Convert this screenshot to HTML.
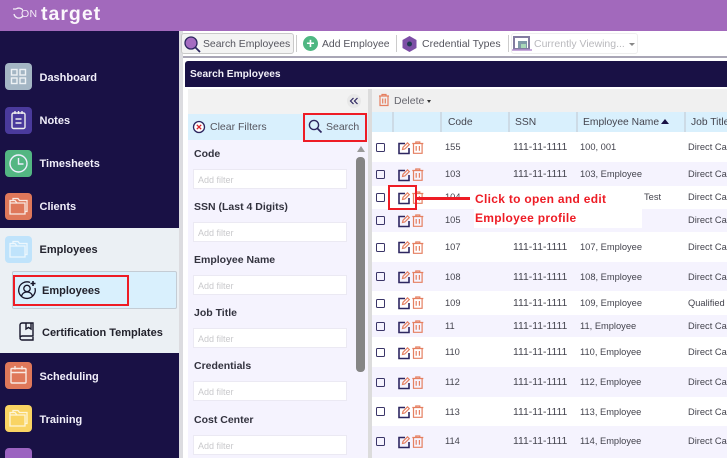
<!DOCTYPE html>
<html><head><meta charset="utf-8">
<style>
html,body{margin:0;padding:0;overflow:hidden;width:727px;height:458px}
body{position:relative;background:#fff;font-family:"Liberation Sans",sans-serif;font-size:10px;color:#3d3d48}
.a,svg{position:absolute}
.t{position:absolute;white-space:nowrap;line-height:14px}
.nav{font-size:11px;font-weight:bold;color:#f1effa;left:39.5px;margin-top:1px}
.ic{position:absolute;left:5px;width:27px;height:27px;border-radius:4px}
.lab{position:absolute;left:194px;font-size:10.5px;font-weight:bold;color:#33333f;line-height:14px;margin-top:1px}
.inp{position:absolute;left:193px;width:152px;height:18px;background:#fff;border:1px solid #ebe9f3;color:#c9c9cc;font-size:9px;line-height:20px;text-indent:4px}
.row{position:absolute;left:372px;width:355px}
.c{position:absolute;font-size:9.3px;color:#44444e;white-space:nowrap;line-height:14px}
.s{font-size:10.4px;margin-top:1px}
.cb{position:absolute;left:376px;width:6.5px;height:6.500px;border:1.5px solid #3a3568;border-radius:1.5px}
.hd{position:absolute;top:112px;height:20px;width:2px;background:#cddbe6}
</style></head><body>
<!-- top bar -->
<div class="a" style="left:0;top:0;width:727px;height:31px;background:#a269bc"></div>
<div class="t" style="left:21px;top:6px;color:#f3ecf7;font-size:10.5px;letter-spacing:.3px;line-height:16px">ON</div>
<svg style="left:11px;top:6px" width="12" height="14" viewBox="0 0 12 14"><path d="M2 3h3M5 3a5 5 0 1 1-2 5" fill="none" stroke="#f3ecf7" stroke-width="1.3"/></svg>
<div class="t" style="left:41px;top:3px;color:#fbf7fc;font-size:19.5px;font-weight:bold;letter-spacing:1px;line-height:22px">target</div>
<!-- sidebar -->
<div class="a" style="left:0;top:31px;width:179px;height:427px;background:#191145"></div>
<div class="a" style="left:0;top:228px;width:179px;height:125px;background:#ebf0f4"></div>
<div class="a" style="left:179px;top:31px;width:4px;height:427px;background:#dcdce0"></div>

<div class="ic" style="top:63px;background:#a4b6c4"></div>
<svg style="left:5px;top:63px" width="27" height="27" viewBox="0 0 27 27" fill="none" stroke="#eef2f5" stroke-width="1.4"><rect x="6.5" y="6.5" width="5.5" height="5.5"/><rect x="15" y="6.5" width="5.5" height="5.5"/><rect x="6.5" y="15" width="5.5" height="5.5"/><rect x="15" y="15" width="5.5" height="5.5"/></svg>
<div class="t nav" style="top:70px">Dashboard</div>
<div class="ic" style="top:107px;background:#4a3a9c"></div>
<svg style="left:5px;top:107px" width="27" height="27" viewBox="0 0 27 27" fill="none" stroke="#eee" stroke-width="1.4"><rect x="7" y="6" width="13" height="15.5" rx="1.5"/><path d="M10 4v3M13.5 4v3M17 4v3M10.5 12h6M10.5 16h6"/></svg>
<div class="t nav" style="top:113px">Notes</div>
<div class="ic" style="top:150px;background:#53b682"></div>
<svg style="left:5px;top:150px" width="27" height="27" viewBox="0 0 27 27" fill="none" stroke="#eef" stroke-width="1.4"><circle cx="13.5" cy="13.5" r="8.5"/><path d="M13.5 8v6h5"/></svg>
<div class="t nav" style="top:156px">Timesheets</div>
<div class="ic" style="top:193px;background:#df785a"></div>
<svg style="left:5px;top:193px" width="27" height="27" viewBox="0 0 27 27" fill="none" stroke="#f8e9e3" stroke-width="1.3"><path d="M5 10h15v11H5zM5 10V7.500h5l2 2.500M8 7V5.500h5l1.500 2H22v11h-2"/></svg>
<div class="t nav" style="top:199px">Clients</div>

<div class="ic" style="top:236px;background:#bfe3fb"></div>
<svg style="left:5px;top:236px" width="27" height="27" viewBox="0 0 27 27" fill="none" stroke="#edf7fd" stroke-width="1.3"><path d="M5 10h15v11H5zM5 10V7.500h5l2 2.500M8 7V5.500h5l1.500 2H22v11h-2"/></svg>
<div class="t nav" style="top:242px;color:#22222c">Employees</div>

<div class="a" style="left:12px;top:271px;width:165px;height:38px;background:#d9f0fd;border:1px solid #c4ccd4;box-sizing:border-box;border-radius:2px"></div>
<div class="a" style="left:13px;top:275px;width:116px;height:31px;border:2px solid #ee1c25;box-sizing:border-box"></div>
<svg style="left:17px;top:280px" width="20" height="20" viewBox="0 0 20 20" fill="none" stroke="#16162a" stroke-width="1.3"><path d="M13 2.400A8.300 8.300 0 1 0 18 8"/><circle cx="10" cy="8.500" r="3.200"/><path d="M4.500 16c1-3 3-4 5.500-4s4.500 1 5.500 4"/><path d="M16 1v5M13.500 3.500h5" stroke-width="1.600"/></svg>
<div class="t nav" style="left:42px;top:283px;color:#22222c">Employees</div>
<svg style="left:18px;top:322px" width="17" height="19" viewBox="0 0 17 19" fill="none" stroke="#16162a" stroke-width="1.4"><path d="M2 15V3a2 2 0 0 1 2-2h11v13H4a2 2 0 0 0-2 2 2 2 0 0 0 2 2h11v-3"/><path d="M8 1v6l2.500-1.500L13 7V1"/></svg>
<div class="t nav" style="left:42px;top:325px;color:#22222c">Certification Templates</div>

<div class="ic" style="top:362px;background:#df785a"></div>
<svg style="left:5px;top:362px" width="27" height="27" viewBox="0 0 27 27" fill="none" stroke="#f8e9e3" stroke-width="1.4"><rect x="6" y="6.500" width="15" height="14.500" rx="1"/><path d="M6 10.500h15M10 4v3.500M17 4v3.500"/></svg>
<div class="t nav" style="top:369px">Scheduling</div>
<div class="ic" style="top:405px;background:#f9d463"></div>
<svg style="left:5px;top:405px" width="27" height="27" viewBox="0 0 27 27" fill="none" stroke="#fdf5d8" stroke-width="1.3"><path d="M5 10h15v11H5zM5 10V7.500h5l2 2.500M8 7V5.500h5l1.500 2H22v11h-2"/></svg>
<div class="t nav" style="top:412px">Training</div>
<div class="ic" style="top:448px;height:10px;border-radius:4px 4px 0 0;background:#9b63c0"></div>

<!-- toolbar -->
<div class="a" style="left:183px;top:31px;width:544px;height:25px;background:#fff"></div>
<div class="a" style="left:183px;top:56px;width:544px;height:2px;background:#a9a6b6"></div>
<div class="a" style="left:181px;top:33px;width:113px;height:21px;background:#f3f3f3;border:1px solid #c9c9c9;border-radius:3px;box-sizing:border-box"></div>
<svg style="left:183px;top:34px" width="20" height="20" viewBox="0 0 20 20"><circle cx="8" cy="9" r="6" fill="#a56cc1" stroke="#2d2660" stroke-width="1.300"/><path d="M12.500 13.500l4.500 4.500" stroke="#2d2660" stroke-width="1.800"/></svg>
<div class="t" style="left:203px;top:38px;font-size:10.400px;color:#55555e">Search Employees</div>
<div class="a" style="left:296px;top:35px;width:1px;height:17px;background:#ccc"></div>
<div class="a" style="left:303px;top:36px;width:15px;height:15px;border-radius:50%;background:#4fb782"></div>
<div class="t" style="left:303px;top:36px;width:15px;text-align:center;color:#fff;font-size:14px;font-weight:bold;line-height:15px">+</div>
<div class="t" style="left:322px;top:38px;font-size:10.400px;color:#55555e">Add Employee</div>
<div class="a" style="left:396px;top:35px;width:1px;height:17px;background:#ccc"></div>
<svg style="left:402px;top:36px" width="15" height="16" viewBox="0 0 15 16"><path d="M7.500 0L14.500 4v8l-7 4-7-4V4z" fill="#7d4fa6"/><circle cx="7.500" cy="8" r="2.500" fill="#1f3a52"/></svg>
<div class="t" style="left:422px;top:37px;font-size:10.500px;color:#55555e">Credential Types</div>
<div class="a" style="left:508px;top:35px;width:1px;height:17px;background:#ccc"></div>
<div class="a" style="left:511px;top:33px;width:127px;height:21px;border:1px solid #eee;border-radius:3px;box-sizing:border-box"></div>
<svg style="left:512px;top:36px" width="20" height="16" viewBox="0 0 20 16"><rect x="2" y="1" width="15" height="12" fill="#fff" stroke="#827ca0" stroke-width="2"/><rect x="6" y="5" width="9" height="7" fill="#7f9aa8"/><rect x="9" y="8" width="5" height="4" fill="#a8d8b8"/><path d="M0 14h20" stroke="#b58fd0" stroke-width="1.500"/></svg>
<div class="t" style="left:534px;top:37px;font-size:10.500px;color:#b9b9bd">Currently Viewing...</div>
<div class="a" style="left:629px;top:43px;border:3px solid transparent;border-top:3px solid #888;border-bottom:0"></div>

<!-- panel -->
<div class="a" style="left:183px;top:58px;width:544px;height:400px;background:#fff"></div>
<div class="a" style="left:185px;top:61px;width:542px;height:26px;background:#191145;border-radius:3px 0 0 0"></div>
<div class="t" style="left:190px;top:68px;font-size:10.200px;font-weight:bold;color:#f2f0f8">Search Employees</div>

<!-- filter panel -->
<div class="a" style="left:188px;top:89px;width:180px;height:369px;background:#f5f3fe"></div>
<div class="a" style="left:188px;top:89px;width:180px;height:25px;background:#f2f2f2"></div>
<div class="a" style="left:347px;top:94px;width:14px;height:14px;border-radius:50%;background:#e8e8e8"></div>
<svg style="left:349px;top:97px" width="10" height="8" viewBox="0 0 10 8" fill="none" stroke="#2d2660" stroke-width="1.200"><path d="M4.500 1L1.500 4l3 3M8.500 1L5.500 4l3 3"/></svg>
<div class="a" style="left:188px;top:114px;width:180px;height:26px;background:#d9f0fd"></div>
<svg style="left:192px;top:120px" width="14" height="14" viewBox="0 0 14 14"><circle cx="7" cy="7" r="5.500" fill="#fff" stroke="#2d2660" stroke-width="1.300"/><path d="M4.800 4.800l4.400 4.400M9.200 4.800l-4.400 4.400" stroke="#d8232a" stroke-width="1.300"/></svg>
<div class="t" style="left:210px;top:120px;font-size:10.500px;color:#55555e">Clear Filters</div>
<div class="a" style="left:303px;top:113px;width:64px;height:29px;border:2px solid #ee1c25;box-sizing:border-box"></div>
<svg style="left:308px;top:119px" width="15" height="15" viewBox="0 0 15 15" fill="none" stroke="#2d2660"><circle cx="6" cy="6" r="4.600" stroke-width="1.400"/><path d="M9.500 9.500l4 4" stroke-width="1.700"/></svg>
<div class="t" style="left:326px;top:120px;font-size:10.500px;color:#55555e">Search</div>

<div class="lab" style="top:146px">Code</div><div class="inp" style="top:169px">Add filter</div>
<div class="lab" style="top:199px">SSN (Last 4 Digits)</div><div class="inp" style="top:222px">Add filter</div>
<div class="lab" style="top:252px">Employee Name</div><div class="inp" style="top:275px">Add filter</div>
<div class="lab" style="top:305px">Job Title</div><div class="inp" style="top:328px">Add filter</div>
<div class="lab" style="top:358px">Credentials</div><div class="inp" style="top:381px">Add filter</div>
<div class="lab" style="top:412px">Cost Center</div><div class="inp" style="top:435px">Add filter</div>

<div class="a" style="left:353px;top:143px;width:15px;height:315px;background:#f5f3fe"></div>
<div class="a" style="left:357px;top:146px;border:4px solid transparent;border-bottom:6px solid #9a9a9a;border-top:0"></div>
<div class="a" style="left:356px;top:157px;width:9px;height:215px;background:#858585;border-radius:4px"></div>
<div class="a" style="left:368px;top:89px;width:4px;height:369px;background:#dcdcdc"></div>

<!-- table -->
<div class="a" style="left:372px;top:89px;width:355px;height:23px;background:#f0f0f0"></div>
<svg style="left:378px;top:93px" width="12" height="14" viewBox="0 0 12 14" fill="none" stroke="#e57f60" stroke-width="1.200"><path d="M1 3h10M4 3V1.500h4V3M2 3v9.500h8V3M4.700 5.500v5M7.300 5.500v5"/></svg>
<div class="t" style="left:394px;top:94px;font-size:10.500px;color:#66666e">Delete</div>
<div class="a" style="left:427px;top:100px;border:2.500px solid transparent;border-top:3px solid #333;border-bottom:0"></div>
<div class="a" style="left:372px;top:112px;width:355px;height:20px;background:#d9f0fd"></div>
<div class="hd" style="left:392px"></div><div class="hd" style="left:440px"></div><div class="hd" style="left:508px"></div><div class="hd" style="left:576px"></div><div class="hd" style="left:684px"></div>
<div class="t" style="left:448px;top:116px;font-size:10.300px;color:#44444e">Code</div>
<div class="t" style="left:515px;top:116px;font-size:10.300px;color:#44444e">SSN</div>
<div class="t" style="left:583px;top:116px;font-size:10.300px;color:#44444e">Employee Name</div>
<div class="a" style="left:661px;top:119px;border:4px solid transparent;border-bottom:5px solid #191145;border-top:0"></div>
<div class="t" style="left:691px;top:116px;font-size:10.300px;color:#44444e">Job Title</div>

<div class="row" style="top:132px;height:30px;background:#fff"></div>
<div class="row" style="top:162px;height:24px;background:#f5f3fe"></div>
<div class="row" style="top:186px;height:23px;background:#fff"></div>
<div class="row" style="top:209px;height:23px;background:#f5f3fe"></div>
<div class="row" style="top:232px;height:30px;background:#fff"></div>
<div class="row" style="top:262px;height:29px;background:#f5f3fe"></div>
<div class="row" style="top:291px;height:24px;background:#fff"></div>
<div class="row" style="top:315px;height:22px;background:#f5f3fe"></div>
<div class="row" style="top:337px;height:30px;background:#fff"></div>
<div class="row" style="top:367px;height:30px;background:#f5f3fe"></div>
<div class="row" style="top:397px;height:29px;background:#fff"></div>
<div class="row" style="top:426px;height:32px;background:#f5f3fe"></div>

<svg width="0" height="0" style="position:absolute"><defs>
<g id="e" fill="none"><path d="M7 2.500H1v10h10V7" stroke="#2d2660" stroke-width="1.600"/><path d="M4.500 8.500l.5-2.200L9.500 1.800l1.800 1.800L6.800 8z" stroke="#e57f60" stroke-width="1.200"/></g>
<g id="d" fill="none" stroke="#e57f60" stroke-width="1.200"><path d="M.3 2.500h11M3.800 2.500V1h4v1.500M1.500 2.500v9.800h8.600V2.500M4.200 5v4.800M7.400 5v4.800"/></g>
</defs></svg>

<div class="cb" style="top:143px"></div><svg style="left:398px;top:141px" width="14" height="14"><use href="#e"/></svg><svg style="left:412px;top:141px" width="12" height="13"><use href="#d"/></svg>
<div class="c" style="left:445px;top:140px">155</div><div class="c s" style="left:513px;top:140px">111-11-1111</div><div class="c" style="left:580px;top:140px">100, 001</div><div class="c" style="left:688px;top:140px">Direct Ca</div>
<div class="cb" style="top:170px"></div><svg style="left:398px;top:168px" width="14" height="14"><use href="#e"/></svg><svg style="left:412px;top:168px" width="12" height="13"><use href="#d"/></svg>
<div class="c" style="left:445px;top:167px">103</div><div class="c s" style="left:513px;top:167px">111-11-1111</div><div class="c" style="left:580px;top:167px">103, Employee</div><div class="c" style="left:688px;top:167px">Direct Ca</div>
<div class="cb" style="top:193px"></div><svg style="left:398px;top:191px" width="14" height="14"><use href="#e"/></svg><svg style="left:412px;top:191px" width="12" height="13"><use href="#d"/></svg>
<div class="c" style="left:445px;top:190px">104</div><div class="c" style="left:644px;top:190px">Test</div><div class="c" style="left:688px;top:190px">Direct Ca</div>
<div class="cb" style="top:216px"></div><svg style="left:398px;top:214px" width="14" height="14"><use href="#e"/></svg><svg style="left:412px;top:214px" width="12" height="13"><use href="#d"/></svg>
<div class="c" style="left:445px;top:213px">105</div><div class="c" style="left:688px;top:213px">Direct Ca</div>
<div class="cb" style="top:243px"></div><svg style="left:398px;top:240px" width="14" height="14"><use href="#e"/></svg><svg style="left:412px;top:241px" width="12" height="13"><use href="#d"/></svg>
<div class="c" style="left:445px;top:240px">107</div><div class="c s" style="left:513px;top:240px">111-11-1111</div><div class="c" style="left:580px;top:240px">107, Employee</div><div class="c" style="left:688px;top:240px">Direct Ca</div>
<div class="cb" style="top:272px"></div><svg style="left:398px;top:270px" width="14" height="14"><use href="#e"/></svg><svg style="left:412px;top:270px" width="12" height="13"><use href="#d"/></svg>
<div class="c" style="left:445px;top:270px">108</div><div class="c s" style="left:513px;top:270px">111-11-1111</div><div class="c" style="left:580px;top:270px">108, Employee</div><div class="c" style="left:688px;top:270px">Direct Ca</div>
<div class="cb" style="top:299px"></div><svg style="left:398px;top:296px" width="14" height="14"><use href="#e"/></svg><svg style="left:412px;top:296px" width="12" height="13"><use href="#d"/></svg>
<div class="c" style="left:445px;top:296px">109</div><div class="c s" style="left:513px;top:296px">111-11-1111</div><div class="c" style="left:580px;top:296px">109, Employee</div><div class="c" style="left:688px;top:296px">Qualified</div>
<div class="cb" style="top:322px"></div><svg style="left:398px;top:320px" width="14" height="14"><use href="#e"/></svg><svg style="left:412px;top:320px" width="12" height="13"><use href="#d"/></svg>
<div class="c" style="left:445px;top:319px">11</div><div class="c s" style="left:513px;top:319px">111-11-1111</div><div class="c" style="left:580px;top:319px">11, Employee</div><div class="c" style="left:688px;top:319px">Direct Ca</div>
<div class="cb" style="top:348px"></div><svg style="left:398px;top:346px" width="14" height="14"><use href="#e"/></svg><svg style="left:412px;top:346px" width="12" height="13"><use href="#d"/></svg>
<div class="c" style="left:445px;top:345px">110</div><div class="c s" style="left:513px;top:345px">111-11-1111</div><div class="c" style="left:580px;top:345px">110, Employee</div><div class="c" style="left:688px;top:345px">Direct Ca</div>
<div class="cb" style="top:378px"></div><svg style="left:398px;top:376px" width="14" height="14"><use href="#e"/></svg><svg style="left:412px;top:376px" width="12" height="13"><use href="#d"/></svg>
<div class="c" style="left:445px;top:375px">112</div><div class="c s" style="left:513px;top:375px">111-11-1111</div><div class="c" style="left:580px;top:375px">112, Employee</div><div class="c" style="left:688px;top:375px">Direct Ca</div>
<div class="cb" style="top:407px"></div><svg style="left:398px;top:405px" width="14" height="14"><use href="#e"/></svg><svg style="left:412px;top:405px" width="12" height="13"><use href="#d"/></svg>
<div class="c" style="left:445px;top:405px">113</div><div class="c s" style="left:513px;top:405px">111-11-1111</div><div class="c" style="left:580px;top:405px">113, Employee</div><div class="c" style="left:688px;top:405px">Direct Ca</div>
<div class="cb" style="top:437px"></div><svg style="left:398px;top:435px" width="14" height="14"><use href="#e"/></svg><svg style="left:412px;top:435px" width="12" height="13"><use href="#d"/></svg>
<div class="c" style="left:445px;top:434px">114</div><div class="c s" style="left:513px;top:434px">111-11-1111</div><div class="c" style="left:580px;top:434px">114, Employee</div><div class="c" style="left:688px;top:434px">Direct Ca</div>

<!-- annotation -->
<div class="a" style="left:474px;top:187px;width:168px;height:41px;background:#fff"></div>
<div class="a" style="left:388px;top:185px;width:29px;height:25px;border:2px solid #ee1c25;box-sizing:border-box"></div>
<div class="a" style="left:417px;top:197px;width:53px;height:3px;background:#ee1c25"></div>
<div class="t" style="left:475px;top:192px;font-size:12px;font-weight:bold;color:#ee1c25;letter-spacing:.3px">Click to open and edit</div>
<div class="t" style="left:475px;top:211px;font-size:12px;font-weight:bold;color:#ee1c25;letter-spacing:.3px">Employee profile</div>
</body></html>
